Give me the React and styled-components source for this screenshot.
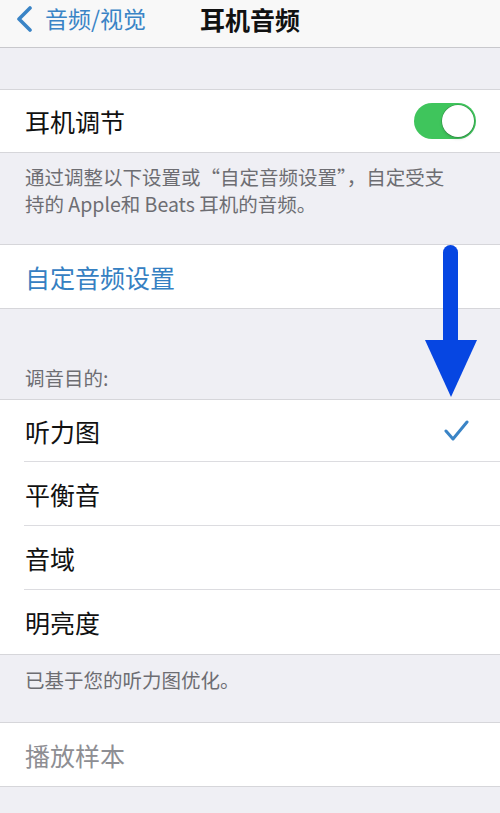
import React from "react";
import styled, { createGlobalStyle } from "styled-components";

const Global = createGlobalStyle`
  html, body { margin: 0; padding: 0; background: #efeff4; }
  body { font-family: "Noto Sans CJK SC", "Noto Sans", sans-serif; }
`;

const Page = styled.div`
  position: relative;
  width: 500px;
  height: 813px;
  overflow: hidden;
  background: #efeff4;
  display: flex;
  flex-direction: column;
`;

const NavBar = styled.div`
  height: 48px;
  box-sizing: border-box;
  padding-bottom: 10px;
  flex: none;
  background: #f8f8f8;
  border-bottom: 1px solid #c8c8cc;
  display: flex;
  align-items: center;
  position: relative;
`;

const Back = styled.div`
  display: flex;
  align-items: center;
  gap: 10px;
  padding-left: 15px;
  color: #3a84c6;
  font-size: 23px;
  line-height: 1;
`;

const Title = styled.div`
  position: absolute;
  left: 200px;
  top: 0;
  height: 37px;
  display: flex;
  align-items: center;
  font-size: 25px;
  font-weight: 700;
  color: #111;
`;

const Spacer = styled.div`
  height: ${(p) => p.h}px;
  flex: none;
`;

const Group = styled.div`
  background: #fff;
  border-top: 1px solid #d6d6da;
  border-bottom: 1px solid #d6d6da;
  flex: none;
`;

const Row = styled.div`
  height: ${(p) => p.h || 63}px;
  display: flex;
  align-items: center;
  justify-content: space-between;
  padding: 0 24px 0 25px;
  position: relative;
  font-size: 25px;
  color: ${(p) => (p.tone === "link" ? "#3580c2" : p.tone === "muted" ? "#8e8e93" : "#111")};
  & + & {
    border-top: 1px solid #dcdce0;
  }
`;

const InsetRow = styled(Row)`
  & + & {
    border-top: none;
  }
  & + &::before {
    content: "";
    position: absolute;
    left: 24px;
    right: 0;
    top: -1px;
    height: 1px;
    background: #dcdce0;
  }
`;

const Footer = styled.div`
  flex: none;
  padding: ${(p) => p.pt}px 25px ${(p) => p.pb}px 25px;
  font-size: 19.5px;
  line-height: 27px;
  color: #6d6d72;
  box-sizing: border-box;
  height: ${(p) => p.h}px;
`;

const Toggle = styled.div`
  width: 62px;
  height: 36px;
  border-radius: 18px;
  background: #3fc55c;
  position: relative;
  &::after {
    content: "";
    position: absolute;
    right: 2px;
    top: 2px;
    width: 32px;
    height: 32px;
    border-radius: 50%;
    background: #fff;
    box-shadow: 0 0 0 0.5px rgba(0, 0, 0, 0.25), 0 2px 3px rgba(0, 0, 0, 0.15);
  }
`;

const Check = styled.svg`
  margin-right: 6px;
`;

const Arrow = styled.svg`
  position: absolute;
  left: 420px;
  top: 240px;
`;

const Rest = styled.div`
  flex: 1;
`;

export default function App() {
  return (
    <>
      <Global />
      <Page>
        <NavBar>
          <Back>
            <svg width="20" height="26" viewBox="0 0 20 26">
              <polyline points="15,2 4,13 15,24" fill="none" stroke="#3a84c6" strokeWidth="3.6" strokeLinecap="round" strokeLinejoin="round" />
            </svg>
            <span>音频/视觉</span>
          </Back>
          <Title>耳机音频</Title>
        </NavBar>
        <Spacer h={41} />
        <Group>
          <Row h={62}>
            <span>耳机调节</span>
            <Toggle />
          </Row>
        </Group>
        <Footer pt={10} pb={27} h={91}>
          通过调整以下设置或“自定音频设置”，自定受支
          <br />
          持的 Apple和 Beats 耳机的音频。
        </Footer>
        <Group>
          <Row tone="link" h={63}>
            <span>自定音频设置</span>
          </Row>
        </Group>
        <Footer pt={55} pb={8} h={90}>
          调音目的:
        </Footer>
        <Group>
          <InsetRow h={62}>
            <span>听力图</span>
            <Check width="26" height="24" viewBox="0 0 26 24">
              <polyline points="2,12 9,20 23,3" fill="none" stroke="#3a84c6" strokeWidth="3" strokeLinecap="round" strokeLinejoin="round" />
            </Check>
          </InsetRow>
          <InsetRow h={64}>
            <span>平衡音</span>
          </InsetRow>
          <InsetRow h={64}>
            <span>音域</span>
          </InsetRow>
          <InsetRow h={64}>
            <span>明亮度</span>
          </InsetRow>
        </Group>
        <Footer pt={11} pb={29} h={67}>
          已基于您的听力图优化。
        </Footer>
        <Group>
          <Row tone="muted" h={63}>
            <span>播放样本</span>
          </Row>
        </Group>
        <Rest />
        <Arrow width="62" height="162" viewBox="0 0 62 162">
          <rect x="23" y="5" width="15" height="105" rx="7.5" fill="#0646e2" />
          <polygon points="5,100 57,100 31,157" fill="#0646e2" />
        </Arrow>
      </Page>
    </>
  );
}
